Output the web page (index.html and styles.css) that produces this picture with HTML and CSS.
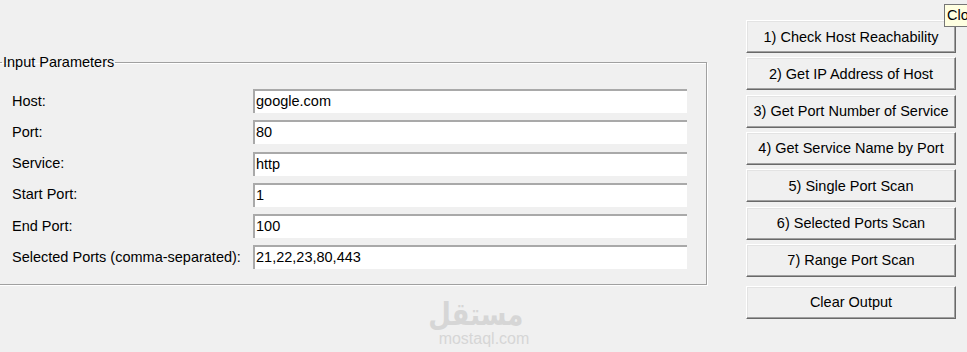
FILE: index.html
```html
<!DOCTYPE html>
<html lang="en">
<head>
<meta charset="utf-8">
<title>Port Scanner</title>
<link rel="stylesheet" href="styles.css">
</head>
<body>
<div class="app">
  <fieldset class="frame">
    <legend class="frame-title">Input Parameters</legend>
    <div class="form">
      <label class="lbl">Host:</label><div class="entry">google.com</div>
      <label class="lbl">Port:</label><div class="entry">80</div>
      <label class="lbl">Service:</label><div class="entry">http</div>
      <label class="lbl">Start Port:</label><div class="entry">1</div>
      <label class="lbl">End Port:</label><div class="entry">100</div>
      <label class="lbl">Selected Ports (comma-separated):</label><div class="entry">21,22,23,80,443</div>
    </div>
  </fieldset>
  <div class="actions">
    <button class="btn">1) Check Host Reachability</button>
    <button class="btn">2) Get IP Address of Host</button>
    <button class="btn">3) Get Port Number of Service</button>
    <button class="btn">4) Get Service Name by Port</button>
    <button class="btn">5) Single Port Scan</button>
    <button class="btn">6) Selected Ports Scan</button>
    <button class="btn">7) Range Port Scan</button>
    <button class="btn btn-clear">Clear Output</button>
  </div>
</div>
<div class="tooltip">Close</div>
<div class="watermark">
  <div class="wm-ar" dir="rtl" lang="ar">مستقل</div>
  <div class="wm-en">mostaql.com</div>
</div>
</body>
</html>
```

FILE: styles.css
```css
html, body {
  margin: 0;
  padding: 0;
  background: #f0f0f0;
  overflow: hidden;
}
body {
  width: 967px;
  height: 352px;
  position: relative;
  font-family: "Liberation Sans", Arial, sans-serif;
  font-size: 14.5px;
  color: #000;
}
.app {
  display: flex;
  align-items: flex-start;
}
.frame {
  box-sizing: border-box;
  width: 717px;
  margin: 54px 0 0 -10px;
  padding: 18px 0 15px 0;
  border: 1px solid #a0a0a0;
  box-shadow: inset 1px 1px 0 #fff, 1px 1px 0 #fff;
  min-width: 0;
}
.frame-title {
  margin-left: 11px;
  padding: 0 1px;
  line-height: 17px;
}
.form {
  display: grid;
  grid-template-columns: 241px 434px;
  grid-auto-rows: 24px;
  row-gap: 7.25px;
  padding-left: 21px;
  align-items: center;
}
.lbl {
  line-height: 17px;
}
.entry {
  box-sizing: border-box;
  height: 24px;
  background: #fff;
  border-top: 2px solid #a9a9a9;
  border-left: 2px solid #a9a9a9;
  padding-left: 1px;
  line-height: 21px;
  white-space: nowrap;
}
.actions {
  display: flex;
  flex-direction: column;
  gap: 4.33px;
  margin: 20px 0 0 39px;
  width: 210px;
}
.btn {
  box-sizing: border-box;
  height: 33px;
  margin: 0;
  padding: 0;
  font: inherit;
  color: #000;
  background: #f0f0f0;
  border: 1px solid;
  border-color: #fff #696969 #696969 #fff;
  box-shadow: inset -1px -1px 0 #a0a0a0, inset 1px 1px 0 #e3e3e3;
  text-align: center;
  white-space: nowrap;
}
.btn-clear {
  margin-top: 4.7px;
}
.tooltip {
  position: absolute;
  left: 944px;
  top: 4px;
  height: 23px;
  box-sizing: border-box;
  padding: 0 4px 0 2px;
  border: 1px solid #767676;
  background: #ffffe1;
  line-height: 21px;
  white-space: nowrap;
}
.watermark {
  position: absolute;
  left: 437px;
  top: 298px;
  width: 94px;
  text-align: center;
  color: #d6d6d6;
}
.wm-ar {
  font-family: "DejaVu Sans", sans-serif;
  font-weight: bold;
  font-size: 31px;
  line-height: 33px;
  transform: scaleX(0.84);
}
.wm-en {
  font-family: "Liberation Sans", Arial, sans-serif;
  font-size: 16px;
  line-height: 15px;
}
```
